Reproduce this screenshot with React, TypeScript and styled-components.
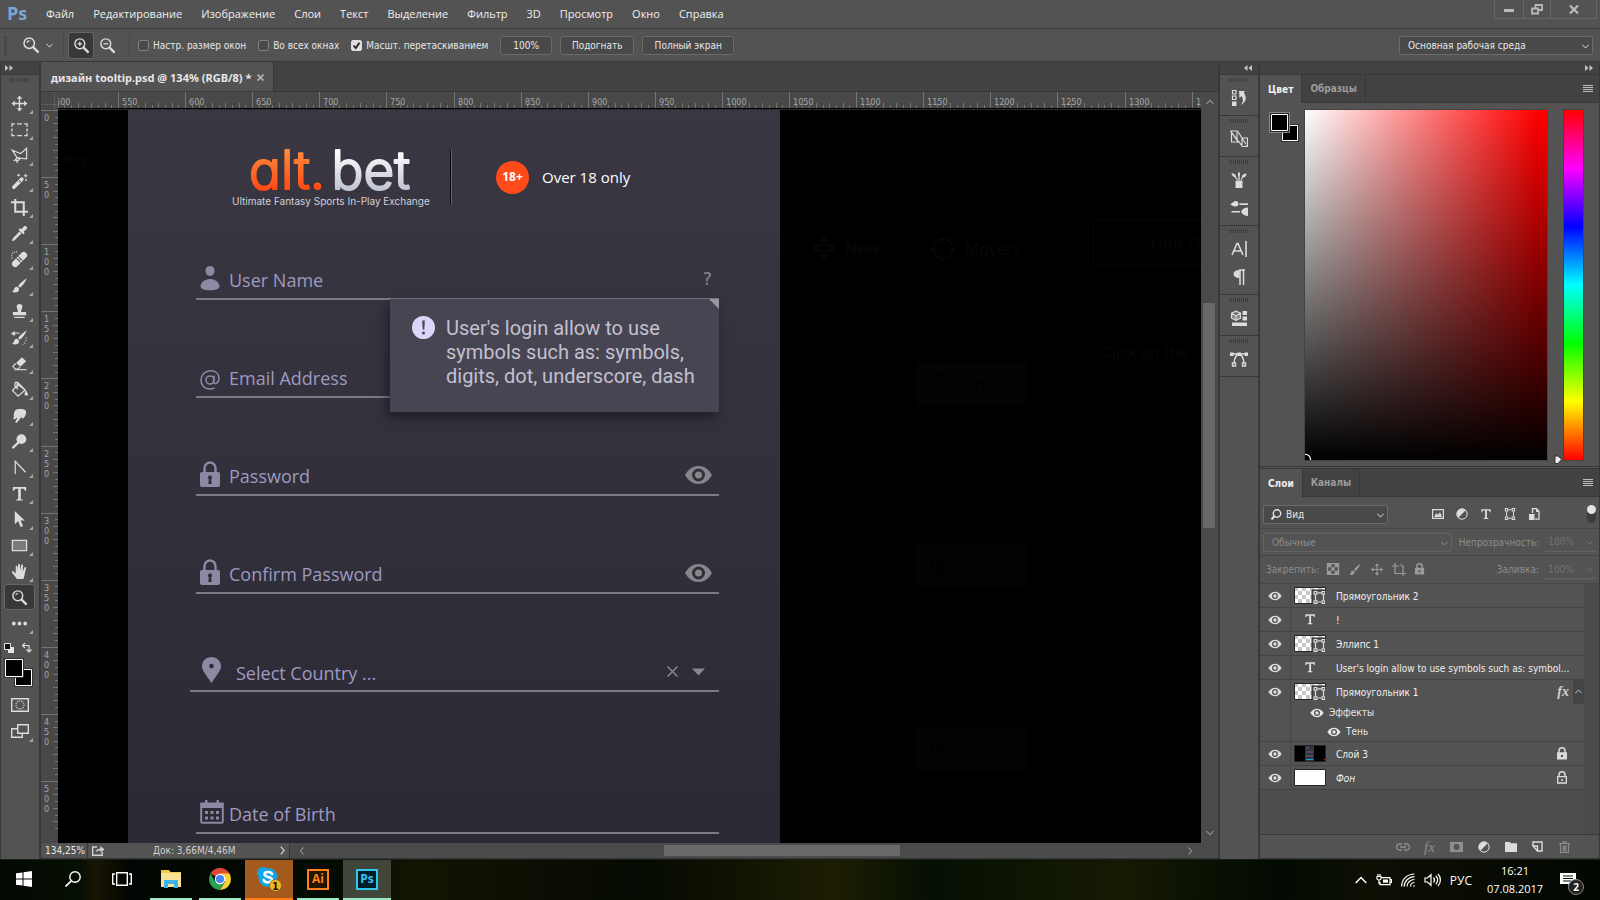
import React from 'react';
import styled, { createGlobalStyle, css } from 'styled-components';

const uiFont = '"DejaVu Sans Condensed", "DejaVu Sans", sans-serif';
const menuFont = '"Open Sans", "Noto Sans", sans-serif';
const line = '#383838';
const base = '#535353';
const dark = '#424242';
const light = '#dcdcdc';

const GlobalStyle = createGlobalStyle`
  *, *::before, *::after { box-sizing: border-box; }
  body { margin: 0; background: ${base}; }
  body, button, input, select { font-family: ${uiFont}; font-size: 10px; color: #e6e6e6; }
  button { background: none; border: 0; padding: 0; margin: 0; cursor: pointer; }
  svg { display: block; flex: none; }
`;

/* ---------- icons ---------- */

type IconProps = { w?: number; h?: number; box?: string; children?: React.ReactNode; stroke?: boolean };
const Svg = ({ w = 18, h = w, box, children, stroke }: IconProps) => (
  <svg
    width={w}
    height={h}
    viewBox={box || `0 0 ${w} ${h}`}
    fill={stroke ? 'none' : 'currentColor'}
    stroke={stroke ? 'currentColor' : 'none'}
    strokeWidth={1.4}
    aria-hidden="true"
  >
    {children}
  </svg>
);

const MoveGlyph = () => (
  <>
    <path d="M9 2V16M2 9H16" fill="none" stroke="currentColor" strokeWidth="1.5" />
    <path d="M9 0.5l3 3.6H6zM9 17.5l3-3.6H6zM0.5 9l3.6-3v6zM17.5 9l-3.6-3v6z" />
  </>
);
const BrushGlyph = () => (
  <path d="M16.8 1.2C13 3.4 9.4 6.8 7.6 9.6l1.9 1.9C12.200 9.400 15.200 5 16.800 1.200zM6.700 10.300c-1.900-.300-3.200 1-3.500 2.700-.200 1.300-1.100 2.200-2.200 2.700 2.600 1.300 6.600 1 7.400-1.600.300-1.100 0-2.100-.300-2.500z" />
);
const LensGlyph = ({ sign = '' }: { sign?: string }) => (
  <g fill="none" stroke="currentColor">
    <circle cx="7.200" cy="7.200" r="5.200" strokeWidth="1.500" />
    <path d="M11 11L16.500 16.500" strokeWidth="2.400" />
    {sign && <path d="M4.800 7.200h4.800" strokeWidth="1.300" />}
    {sign === '+' && <path d="M7.200 4.800v4.800" strokeWidth="1.300" />}
    {!sign && <path d="M5 6.800a2.500 2.500 0 0 1 2.600-2" strokeWidth="1.200" />}
  </g>
);
const PathBoxGlyph = () => (
  <g fill="none" stroke="currentColor" strokeWidth="1.200">
    <path d="M2 4v6M10 4v6M4 2h4M4 12h4" />
    <path d="M.6.6h2.800v2.800H.6zM8.600.6h2.800v2.800H8.600zM.6 10.600h2.800v2.800H.6zM8.600 10.600h2.800v2.800H8.600z" />
  </g>
);
const SerifT = () => <path d="M2 2h14v4.200h-1.300c-.3-1.700-1-2.300-2.500-2.300h-1.800v10c0 1 .5 1.300 2.100 1.400V16.500h-7v-1.200c1.600-.1 2.100-.4 2.100-1.400v-10H5.800C4.300 3.900 3.600 4.500 3.300 6.200H2z" />;
const Chevron = ({ dir = 'down', w = 8 }: { dir?: 'down' | 'up' | 'left' | 'right'; w?: number }) => (
  <Svg w={w} box="0 0 8 8" stroke>
    <path strokeWidth="1.100" d={{ down: 'M.5 2L4 5.800 7.500 2', up: 'M.5 6L4 2.200 7.500 6', left: 'M5.500.5L2.500 4l3 3.500', right: 'M2.500.5L5.500 4l-3 3.500' }[dir]} />
  </Svg>
);
const EyeIcon = () => (
  <Svg w={14} h={10} box="0 0 14 10">
    <path fillRule="evenodd" d="M.3 5C2.200 2.200 4.500.8 7 .8S11.800 2.200 13.700 5C11.800 7.800 9.500 9.200 7 9.200S2.200 7.800.3 5zM7 2a3 3 0 1 0 0 6 3 3 0 0 0 0-6zm0 1.300a1.700 1.700 0 1 1 0 3.400 1.700 1.700 0 0 1 0-3.400z" />
  </Svg>
);
const LockIcon = ({ open, w = 12 }: { open?: boolean; w?: number }) => (
  <Svg w={w} h={w + 1} box="0 0 12 13">
    <path d="M3 6V3.800a3 3 0 0 1 6 0V6" fill="none" stroke="currentColor" strokeWidth="1.500" />
    {open ? (
      <>
        <path d="M1.700 5.700h8.600v6.300H1.700z" fill="none" stroke="currentColor" strokeWidth="1.300" />
        <circle cx="6" cy="9" r="1" />
      </>
    ) : (
      <path fillRule="evenodd" d="M1 5.200h10V12.600H1zM6 7.700a1.200 1.200 0 1 0 0 2.400 1.200 1.200 0 0 0 0-2.400z" />
    )}
  </Svg>
);
const ArrowsIcon = ({ left }: { left?: boolean }) => (
  <Svg w={8} h={6} box="0 0 8 6">
    <path d={left ? 'M3.500 0v6L0 3zM8 0v6L4.500 3z' : 'M0 0v6l3.500-3zM4.500 0v6L8 3z'} />
  </Svg>
);
const Half = ({ w = 12 }: { w?: number }) => (
  <Svg w={w} box="0 0 12 12">
    <circle cx="6" cy="6" r="5.200" fill="none" stroke="currentColor" strokeWidth="1" />
    <path d="M9.700 2.300A5.200 5.200 0 1 0 2.300 9.700z" />
  </Svg>
);
const BurgerIcon = () => (
  <Svg w={10} h={8} stroke>
    <path strokeWidth="1" d="M0 .5h10M0 2.500h10M0 4.500h10M0 6.500h10" />
  </Svg>
);

const tools: { name: string; art: React.ReactNode }[] = [
  { name: 'Перемещение', art: <MoveGlyph /> },
  { name: 'Прямоугольная область', art: <path d="M1 6V3h3M6.500 3h5M14 3h3v3M17 8v3M17 13v2.500h-3M11.500 15.500h-5M4 15.500H1V13M1 11V8" fill="none" stroke="currentColor" strokeWidth="1.400" /> },
  { name: 'Лассо', art: <path d="M1.500 3.500L10 7l6.500-5.500v11L6.500 11.500zM6.500 11.500L3 15M6.500 11.500c2-1 3.500.5 2 2s-3.500 0-3.500 0L7 17" fill="none" stroke="currentColor" strokeWidth="1.300" /> },
  { name: 'Волшебная палочка', art: <><path d="M11.500 6.500L3 15" fill="none" stroke="currentColor" strokeWidth="3.800" strokeLinecap="round" /><path d="M9.700 8.300l-1 1" stroke="#535353" strokeWidth="2" /><path d="M8 .8v3M6.500 2.300h3M15.500.8v4M13.500 2.800h4M16 6.500v2M15 7.500h2" fill="none" stroke="currentColor" strokeWidth="1.100" /></> },
  { name: 'Рамка', art: <path d="M4.500 0v13.500H18M0 3.500h13.500V18" fill="none" stroke="currentColor" strokeWidth="2.200" /> },
  { name: 'Пипетка', art: <><path d="M9.500 7.500L3 14l-1.500 2.500L4 15l6.500-6.500" fill="none" stroke="currentColor" strokeWidth="1.400" /><path d="M8 5l1.500-1.500 1.500 1L13.500 1.500c2-1.500 4.500 1 3 3L13.500 7l1 1.500L13 10z" /></> },
  { name: 'Восстанавливающая кисть', art: <><path d="M4.500 13.500L13.500 4.500" fill="none" stroke="currentColor" strokeWidth="7" strokeLinecap="round" /><path d="M5.500 7.500l5 5M7.500 5.500l5 5" stroke="#535353" strokeWidth="1" /><path d="M7.500 9h.1M9 10.500h.1M9 7.500h.1M10.500 9h.1" stroke="#535353" strokeWidth="1.500" strokeLinecap="round" /><path d="M1 8V4c0-2 2-3 4-3h3" fill="none" stroke="currentColor" strokeDasharray="1 1.500" /></> },
  { name: 'Кисть', art: <BrushGlyph /> },
  { name: 'Штамп', art: <path d="M9 1a3 3 0 0 1 3 3c0 2-1.300 2.800-1.300 5.500H16V13H2V9.500h5.300C7.300 6.800 6 6 6 4a3 3 0 0 1 3-3zM3.500 14.500h11V16h-11z" /> },
  { name: 'Архивная кисть', art: <><BrushGlyph /><path d="M0 5l4-3v2c3-.6 5 0 6 1.500-2-.9-4-.8-6-.3V7.500z" /><path d="M16 9c.5 3-1 6-4 7.500" fill="none" stroke="currentColor" strokeDasharray="1 1.800" /></> },
  { name: 'Ластик', art: <><path d="M11.500 2.500l4.500 4-6 6-4.600-4z" /><path d="M5 9l-3 3 2.500 3H7l2.500-2.200" fill="none" stroke="currentColor" strokeWidth="1.300" /><path d="M4 15.500h12.500" stroke="currentColor" strokeWidth="1.200" /></> },
  { name: 'Заливка', art: <><path d="M7.500 4L1.500 10l6 6 7.500-6.500zM6.500 9V2.500c0-1.800-2.300-1.800-2.300 0V6M6.500 1l8 8" fill="none" stroke="currentColor" strokeWidth="1.300" /><path d="M15.500 9.500c1.500 2 2.500 3.500 2.500 4.700 0 1.700-3.600 1.700-3.600 0 0-1.200.6-2.700 1.100-4.700z" /></> },
  { name: 'Палец', art: <path d="M3 9C3 4 5 2 9 2s7 .5 7 3.500c0 3-1.500 5.500-4 7l-1-2-4.500 6c-1.200 1-2.300 0-1.700-1.200L7 11l-3 2c-1.500.5-2-.8-1-1.800z" /> },
  { name: 'Осветлитель', art: <><circle cx="11" cy="6.500" r="5.200" /><path d="M8 10L1.500 16" stroke="currentColor" strokeWidth="2.400" /></> },
  { name: 'Перо', art: <path d="M4.500 16V2.500L15.500 14" fill="none" stroke="currentColor" strokeWidth="1.300" /> },
  { name: 'Горизонтальный текст', art: <SerifT /> },
  { name: 'Выделение контура', art: <path d="M4 0v14l3.600-3.400L10 17l2.800-1.200-2.700-5.800H14.500z" /> },
  { name: 'Прямоугольник', art: <path d="M1.500 3.500h15v11h-15z" fill="#7a7a7a" stroke="currentColor" strokeWidth="1.400" /> },
  { name: 'Рука', art: <path d="M6 17c-1-2-3-4.500-5-7-.6-1.200.9-1.800 1.800-.9L5 11V4c0-1.300 1.800-1.300 1.900 0l.4 4L7.500 2c0-1.400 2-1.400 2 0l.2 6L10.800 2.500c.2-1.200 2-1 1.900.3L12.300 9l1.900-4c.5-1.200 2-.6 1.700.6L14.500 12c-.4 2.500-1 4-1.500 5z" /> },
  { name: 'Масштаб', art: <LensGlyph /> },
  { name: 'Редактировать панель', art: <path d="M1 9a2 2 0 1 1 4 0 2 2 0 0 1-4 0zM7 9a2 2 0 1 1 4 0 2 2 0 0 1-4 0zM13 9a2 2 0 1 1 4 0 2 2 0 0 1-4 0z" /> },
];

/* ---------- window shell ---------- */

const Screen = styled.div`
  height: 100vh;
  display: flex;
  flex-direction: column;
  overflow: hidden;
  background: ${base};
`;
const MenuBar = styled.header`
  height: 29px;
  flex: none;
  display: flex;
  align-items: flex-start;
  border-bottom: 1px solid ${line};
`;
const PsMark = styled.span`
  width: 37px;
  padding-left: 7px;
  font: bold 18px/26px ${menuFont};
  color: #7ca6d3;
`;
const Menu = styled.nav`
  display: flex;
  flex: 1;
  gap: 1px;
  height: 28px;
`;
const MenuItem = styled.button`
  padding: 0 9px;
  font: 11px/28px ${menuFont};
  color: #f0f0f0;
`;
const WindowControls = styled.div`
  display: flex;
  margin-right: 3px;
  border: 1px solid #666;
  border-top: 0;
  border-radius: 0 0 3px 3px;
  color: #b9b9b9;
`;
const WindowButton = styled.button<{ $w: number }>`
  width: ${(p) => p.$w}px;
  height: 18px;
  display: grid;
  place-items: center;
  color: inherit;
  & + & { border-left: 1px solid #666; }
`;
const OptionsBar = styled.div`
  height: 33px;
  flex: none;
  display: flex;
  align-items: center;
  gap: 8px;
  padding: 0 7px 0 4px;
  border-bottom: 1px solid ${line};
`;
const Grip = styled.span<{ $vertical?: boolean }>`
  flex: none;
  ${(p) =>
    p.$vertical
      ? css`width: 3px; height: 19px; background: repeating-linear-gradient(#3e3e3e 0 1px, transparent 1px 2px);`
      : css`width: 20px; height: 4px; margin: 3px auto 2px; background: repeating-linear-gradient(90deg, #3e3e3e 0 1px, transparent 1px 2px);`}
`;
const IconButton = styled.button<{ $active?: boolean }>`
  width: 26px;
  height: 27px;
  display: grid;
  place-items: center;
  border-radius: 3px;
  color: ${light};
  ${(p) => p.$active && css`background: #383838; border: 1px solid #666;`}
`;
const ToolPicker = styled(IconButton)`
  width: 38px;
  margin-right: 2px;
  grid-auto-flow: column;
  justify-content: end;
  gap: 6px;
`;
const Rule = styled.span`
  width: 1px;
  height: 22px;
  background: #474747;
`;
const ZoomPair = styled.div`
  display: flex;
  margin: 0 1px 0 -4px;
`;
const CheckLabel = styled.label`
  display: flex;
  align-items: center;
  gap: 4px;
  margin-right: 4px;
  white-space: nowrap;
`;
const Check = styled.input`
  appearance: none;
  width: 11px;
  height: 11px;
  margin: 0;
  border: 1px solid #808080;
  border-radius: 2px;
  background: #4a4a4a;
  &:checked {
    border-color: #ddd;
    background: #ddd url("data:image/svg+xml,%3Csvg xmlns='http://www.w3.org/2000/svg' viewBox='0 0 9 9'%3E%3Cpath d='M1.500 4.500l2.300 2.500L7.500 1.800' fill='none' stroke='%23222' stroke-width='1.800'/%3E%3C/svg%3E");
  }
`;
const OptionButton = styled.button<{ $w: number }>`
  width: ${(p) => p.$w}px;
  height: 19px;
  border: 1px solid #6a6a6a;
  border-radius: 3px;
  background: #494949;
  white-space: nowrap;
`;
const SelectBox = styled.span<{ $w?: number; $dim?: boolean; $line?: boolean }>`
  position: relative;
  display: flex;
  align-items: center;
  height: 19px;
  width: ${(p) => (p.$w ? p.$w + 'px' : 'auto')};
  border: 1px solid ${(p) => (p.$dim ? '#636363' : '#6a6a6a')};
  border-radius: 2px;
  background: ${(p) => (p.$dim ? 'transparent' : '#494949')};
  color: ${(p) => (p.$dim ? '#8c8c8c' : '#e6e6e6')};
  ${(p) => p.$line && css`border-width: 0 0 1px; border-radius: 0; color: #717171;`}
  > svg:last-child { position: absolute; right: 3px; top: 6px; pointer-events: none; }
`;
const PlainSelect = styled.select<{ $pad?: number }>`
  appearance: none;
  flex: 1;
  min-width: 0;
  height: 17px;
  border: 0;
  padding: 0 0 0 ${(p) => p.$pad ?? 8}px;
  background: transparent;
  color: inherit;
`;
const WorkspaceBox = styled(SelectBox)`
  margin-left: auto;
`;

const Work = styled.main`
  flex: 1;
  min-height: 0;
  display: flex;
`;

/* ---------- tool strip ---------- */

const ToolStrip = styled.aside`
  width: 40px;
  flex: none;
  display: flex;
  flex-direction: column;
  border: 1px solid ${line};
  border-width: 0 1px 0 1px;
`;
const StripHeader = styled.div<{ $end?: boolean }>`
  height: 13px;
  flex: none;
  display: flex;
  align-items: center;
  justify-content: ${(p) => (p.$end ? 'flex-end' : 'flex-start')};
  padding: 0 6px 0 4px;
  background: ${dark};
  border-bottom: 1px solid ${line};
  color: #c4c4c4;
`;
const ToolButton = styled.button<{ $active?: boolean; $single?: boolean }>`
  position: relative;
  width: 31px;
  height: 26px;
  flex: none;
  margin-left: 3px;
  display: grid;
  place-items: center;
  border-radius: 3px;
  color: ${light};
  ${(p) => p.$active && css`background: #383838; box-shadow: inset 0 0 0 1px #666;`}
  ${(p) =>
    !p.$active && !p.$single &&
    css`
      &::after {
        content: '';
        position: absolute;
        right: 2px;
        bottom: 2px;
        border: 2px solid transparent;
        border-right-color: #aaa;
        border-bottom-color: #aaa;
      }
    `}
`;
const ToolList = styled.div`
  display: flex;
  flex-direction: column;
  padding-top: 6px;
`;
const SwatchTools = styled.div`
  margin: 6px 0 3px 3px;
`;

/* ---------- document ---------- */

const DocumentArea = styled.section`
  flex: 1;
  min-width: 0;
  display: flex;
  flex-direction: column;
  border: 1px solid ${line};
  border-width: 0 1px;
  background: ${dark};
`;
const DocTabs = styled.div`
  height: 30px;
  flex: none;
  display: flex;
  border-bottom: 1px solid ${line};
`;
const DocTab = styled.div`
  display: flex;
  align-items: center;
  gap: 6px;
  padding: 2px 9px 0 10px;
  background: ${base};
  border-right: 1px solid ${line};
  font: bold 11px/27px "Noto Sans", sans-serif;
  white-space: nowrap;
`;
const CloseButton = styled.button`
  color: #b0b0b0;
`;
const Viewport = styled.div`
  flex: 1;
  min-height: 0;
  display: grid;
  grid-template: 17px minmax(0, 1fr) / 17px minmax(0, 1fr) 17px;
  background: #484848;
`;
const RulerSlot = styled.div`
  overflow: hidden;
  font-size: 9px;
`;
const Bar = styled.div<{ $x?: boolean }>`
  display: flex;
  flex-direction: ${(p) => (p.$x ? 'row' : 'column')};
  align-items: center;
  justify-content: space-between;
  background: #4a4a4a;
  color: #9a9a9a;
`;
const ScrollColumn = styled(Bar)`
  grid-column: 3;
  grid-row: 1 / 3;
  padding: 6px 0 6px;
`;
const ThumbTrack = styled.div<{ $x?: boolean }>`
  flex: 1;
  align-self: stretch;
  display: flex;
  flex-direction: ${(p) => (p.$x ? 'row' : 'column')};
  padding: ${(p) => (p.$x ? '2px 0' : '0 3px 0 2px')};
`;
const TrackGap = styled.span<{ $grow: number }>`
  flex: ${(p) => p.$grow} 0 0;
`;
const Thumb = styled.span<{ $grow: number }>`
  flex: ${(p) => p.$grow} 0 0;
  background: #696969;
`;
const Canvas = styled.div`
  position: relative;
  overflow: hidden;
  background: #000;
  border-top: 1px solid #2c2c2c;
`;
const Artboard = styled.div`
  width: 652px;
  min-height: 100%;
  margin-left: 70px;
  padding: 37px 61px 12px 68px;
  background: linear-gradient(#3a3743, #32303b 50%, #2b2933);
`;
const BrandRow = styled.div`
  height: 62px;
  margin: 0 0 55px 36px;
  display: flex;
  align-items: flex-start;
`;
const BrandRule = styled.span`
  width: 2px;
  height: 54px;
  margin: 3px 44px 0 18px;
  background: linear-gradient(90deg, #0b0a0f 50%, #67646f 50%);
`;
const AgeBadge = styled.span`
  width: 33px;
  height: 33px;
  margin-top: 14px;
  border-radius: 50%;
  background: #ff4a1a;
  color: #fff;
  font: bold 12px/32px ${menuFont};
  text-align: center;
`;
const AgeText = styled.span`
  margin: 19px 0 0 13px;
  font: 15px/22px ${menuFont};
  color: #fff;
`;
const Field = styled.div<{ $gap?: number; $wide?: boolean }>`
  position: relative;
  display: flex;
  align-items: center;
  height: 36px;
  margin: 0 0 ${(p) => p.$gap ?? 62}px ${(p) => (p.$wide ? -6 : 0)}px;
  padding: 0 7px 2px ${(p) => (p.$wide ? 11 : 4)}px;
  border-bottom: 2px solid #7c7a83;
  color: #8d88a3;
`;
const FieldLabel = styled.label`
  display: flex;
  align-items: center;
  gap: 4px;
  font: 18px/34px ${menuFont};
  color: #9e9ac0;
  white-space: nowrap;
`;
const FieldIcon = styled.span`
  width: 25px;
  height: 30px;
  color: #8d88a3;
`;
const FieldInput = styled.input`
  flex: 1;
  min-width: 0;
  height: 32px;
  margin-left: 8px;
  border: 0;
  outline: 0;
  background: transparent;
  font: 18px ${menuFont};
  color: #fff;
`;
const CountrySelect = styled.select`
  appearance: none;
  flex: 1;
  height: 32px;
  padding: 2px 10px 0;
  border: 0;
  background: transparent;
  font: 18px ${menuFont};
  color: #9e9ac0;
`;
const FieldAction = styled.button`
  display: flex;
  margin-bottom: 2px;
  color: #88868b;
  & + & { margin: 0 7px 2px 14px; }
`;
const HelpButton = styled(FieldAction)`
  font: 18px/30px "DejaVu Sans", sans-serif;
`;
const Hint = styled.div`
  position: absolute;
  z-index: 2;
  top: 35px;
  right: 0;
  width: 329px;
  height: 113px;
  display: flex;
  gap: 11px;
  padding: 17px 0 0 22px;
  background: #484552;
  box-shadow: -3px 5px 10px rgba(10, 8, 20, 0.5);
  font: 20px/24px Roboto, sans-serif;
  color: #c3c0d0;
  &::after {
    content: '';
    position: absolute;
    top: 0;
    right: 0;
    border: 5px solid #99969f;
    border-bottom-color: transparent;
    border-left-color: transparent;
  }
`;
const HintText = styled.p`
  margin: 0;
  white-space: pre-line;
`;
const Ghost = styled.span<{ $x: number; $y: number; $w?: number }>`
  position: absolute;
  left: ${(p) => p.$x}px;
  top: ${(p) => p.$y}px;
  width: ${(p) => (p.$w ? p.$w + 'px' : 'auto')};
  display: flex;
  align-items: center;
  gap: 10px;
  font: 16px/20px ${menuFont};
  white-space: nowrap;
  color: #080808;
`;
const GhostButton = styled(Ghost)`
  height: 43px;
  padding-left: 15px;
  gap: 14px;
  border-radius: 4px;
  background: #030303;
  color: #000;
`;
const GhostBox = styled(Ghost)`
  height: 47px;
  padding-left: 55px;
  border: 1px solid #070707;
  border-radius: 4px;
`;
const StatusBar = styled.footer`
  height: 16px;
  flex: none;
  display: flex;
  align-items: center;
  background: #4a4a4a;
  border-bottom: 1px solid ${line};
`;
const ZoomInput = styled.input`
  width: 47px;
  height: 15px;
  border: 0;
  border-right: 1px solid ${line};
  padding: 0 0 0 4px;
  background: ${base};
`;
const StatusInfo = styled.div`
  width: 202px;
  height: 15px;
  display: flex;
  align-items: center;
  padding: 0 2px 0 4px;
  background: ${base};
  border-right: 1px solid ${line};
  color: #d0d0d0;
`;
const StatusText = styled.span`
  flex: 1;
  padding-left: 48px;
`;
const HScroll = styled(Bar)`
  flex: 1;
  height: 15px;
  padding: 0 24px 0 8px;
`;

/* ---------- icon dock ---------- */

const Dock = styled.aside`
  width: 41px;
  flex: none;
  border: 1px solid ${line};
  border-width: 0 2px 0 1px;
`;
const DockGroup = styled.div`
  display: flex;
  flex-direction: column;
  align-items: center;
  padding-bottom: 3px;
  border-bottom: 1px solid ${line};
`;
const DockButton = styled.button`
  width: 30px;
  height: 28px;
  display: grid;
  place-items: center;
  color: ${light};
`;

/* ---------- panels ---------- */

const Panels = styled.aside`
  width: 340px;
  flex: none;
  display: flex;
  flex-direction: column;
  border-right: 1px solid ${line};
`;
const Panel = styled.section<{ $grow?: boolean }>`
  display: flex;
  flex-direction: column;
  ${(p) => (p.$grow ? css`flex: 1; min-height: 0; border-top: 1px solid ${line}; margin-top: 1px;` : css`border-bottom: 1px solid ${line};`)}
`;
const PanelTabs = styled.div`
  height: 28px;
  flex: none;
  display: flex;
  align-items: stretch;
  background: ${dark};
  border-bottom: 1px solid ${line};
`;
const PanelTab = styled.button<{ $active?: boolean }>`
  padding: 0 8px;
  font-weight: bold;
  border-right: 1px solid ${line};
  color: ${(p) => (p.$active ? '#f0f0f0' : '#9c9c9c')};
  ${(p) => p.$active && css`background: ${base}; margin-bottom: -1px;`}
`;
const PanelMenu = styled.button`
  margin: 0 6px 0 auto;
  color: #bdbdbd;
`;
const ColorBody = styled.div`
  display: flex;
  align-items: flex-start;
  padding: 6px 15px 5px 9px;
`;
const ColorField = styled.div`
  flex: 1;
  height: 352px;
  margin: 0 15px 0 4px;
  border: 1px solid #444;
  background: linear-gradient(to top, #000, transparent), linear-gradient(to right, #fff, #f00 96%);
  display: flex;
  align-items: flex-end;
  overflow: hidden;
`;
const HueBar = styled.div`
  position: relative;
  width: 21px;
  height: 352px;
  border: 1px solid #444;
  background: linear-gradient(#f00, #f0f, #00f, #0ff, #0f0, #ff0, #f00);
  svg { position: absolute; left: -10px; bottom: -4px; }
`;
const SwatchSlot = styled.div`
  margin-top: 3px;
`;
const ToolRow = styled.div<{ $h: number; $low?: boolean }>`
  height: ${(p) => p.$h}px;
  flex: none;
  display: flex;
  align-items: center;
  padding: ${(p) => (p.$low ? 3 : 0)}px 3px 0;
  border-bottom: 1px solid #474747;
`;
const FilterIcons = styled.div`
  display: flex;
  gap: 12px;
  margin: 0 auto;
  padding-right: 3px;
  color: ${light};
`;
const Toggle = styled.label`
  width: 9px;
  height: 18px;
  border-radius: 5px;
  background: #3c3c3c;
  input { appearance: none; display: block; width: 9px; height: 9px; margin: 0; border-radius: 50%; background: #e4e4e4; }
`;
const Dim = styled.label`
  margin: 0 5px 0 7px;
  color: #8c8c8c;
  white-space: nowrap;
`;
const FillLabel = styled(Dim)`
  margin-left: auto;
`;
const LockIcons = styled.div`
  display: flex;
  gap: 8px;
  margin-left: 7px;
  color: #9a9a9a;
`;
const LockLabel = styled.span`
  margin-left: 3px;
  color: #8c8c8c;
`;
const LayerList = styled.ul`
  flex: 1;
  min-height: 0;
  margin: 0;
  padding: 0 15px 0 0;
  list-style: none;
  background: linear-gradient(#4b4b4b, #4b4b4b) right / 15px 100% no-repeat, #4e4e4e;
`;
const LayerItem = styled.li`
  display: flex;
  background: ${base};
  border-bottom: 1px solid #434343;
`;
const EyeColumn = styled.div`
  width: 31px;
  display: flex;
  justify-content: center;
  padding-top: 7px;
  border-right: 1px solid #474747;
  color: ${light};
`;
const LayerBody = styled.div`
  flex: 1;
  min-width: 0;
`;
const LayerMain = styled.div`
  height: 23px;
  display: flex;
  align-items: center;
  padding-left: 3px;
`;
const ThumbSlot = styled.div`
  width: 42px;
  flex: none;
`;
const LayerName = styled.span<{ $italic?: boolean }>`
  flex: 1;
  min-width: 0;
  padding-top: 2px;
  overflow: hidden;
  white-space: nowrap;
  text-overflow: ellipsis;
  font-style: ${(p) => (p.$italic ? 'italic' : 'normal')};
  color: #f0f0f0;
`;
const LayerLock = styled.span`
  margin-right: 16px;
  color: ${light};
`;
const FxMark = styled.span`
  margin-right: 4px;
  font: italic 14px/20px "Liberation Serif", serif;
  font-weight: bold;
  color: #d0d0d0;
`;
const FoldButton = styled.button`
  width: 11px;
  height: 24px;
  display: grid;
  place-items: center;
  background: #454545;
  color: #c0c0c0;
`;
const EffectRow = styled.div<{ $indent: number }>`
  height: 19px;
  display: flex;
  align-items: center;
  gap: 5px;
  padding-left: ${(p) => p.$indent}px;
  color: #e6e6e6;
`;
const PanelFooter = styled.div`
  height: 25px;
  flex: none;
  display: flex;
  align-items: center;
  justify-content: flex-end;
  gap: 4px;
  padding-right: 23px;
  border: 1px solid ${line};
  border-width: 1px 0;
`;
const FootButton = styled.button<{ $dim?: boolean }>`
  width: 23px;
  height: 22px;
  display: grid;
  place-items: center;
  color: ${(p) => (p.$dim ? '#8e8e8e' : light)};
`;
const FootFx = styled(FxMark)`
  margin: 0;
  font-weight: normal;
  font-size: 15px;
  color: inherit;
`;

/* ---------- taskbar ---------- */

const Taskbar = styled.footer`
  height: 41px;
  flex: none;
  display: flex;
  border-top: 1px solid #1b1f1a;
  background: linear-gradient(90deg, #020802, #071004 5%, #181503 6%, #020602 8%, #040c02 22%, #141403 26%, #050a02 40%, #1d1d03 52%, #061003 58%, #151a03 70%, #020a02 80%, #0d1003 85%, #020702);
`;
const TaskButton = styled.button<{ $line?: string; $bg?: string }>`
  width: 48px;
  margin-right: 1px;
  display: grid;
  place-items: center;
  background: ${(p) => p.$bg || 'transparent'};
  color: #fff;
  border-bottom: 2px solid transparent;
  border-image: ${(p) => (p.$line ? (p.$bg ? `linear-gradient(${p.$line}, ${p.$line}) 1` : `linear-gradient(90deg, transparent 4px, ${p.$line} 4px calc(100% - 4px), transparent calc(100% - 4px)) 1`) : 'none')};
`;
const AppTile = styled.span<{ $c: string; $b: string }>`
  width: 22px;
  height: 21px;
  border: 2px solid ${(p) => p.$c};
  background: ${(p) => p.$b};
  color: ${(p) => p.$c};
  font: bold 12px/16px "Open Sans", sans-serif;
`;
const Tray = styled.div`
  margin-left: auto;
  display: flex;
  align-items: center;
  gap: 9px;
  color: #fff;
  font: 11px/18px ${menuFont};
`;
const Lang = styled.button`
  font: 12px ${menuFont};
  color: #fff;
`;
const Clock = styled.time`
  width: 64px;
  margin: 0 0 0 2px;
  text-align: center;
`;
const Notice = styled.button`
  position: relative;
  width: 28px;
  height: 26px;
  margin: 0 12px 0 4px;
  color: #fff;
`;
const NoticeCount = styled.span`
  position: absolute;
  right: 4px;
  bottom: -2px;
  width: 16px;
  height: 16px;
  border: 1px solid #888;
  border-radius: 50%;
  background: #222;
  font: bold 10px/14px ${menuFont};
`;

/* ---------- drawn parts ---------- */

const STEP = 671 / 50;
const LAST_COLUMN = 1400;
const LAST_ROW = 540;

const TopRuler = () => {
  const ticks: React.ReactNode[] = [];
  for (let u = 495; u < LAST_COLUMN; u += 5) {
    const x = Math.round(60 + ((u - 550) * STEP) / 10);
    const major = u % 50 === 0;
    ticks.push(<path key={u} d={`M${x}.5 ${major ? 0 : u % 10 === 0 ? 11 : 13}V16`} stroke="#757575" />);
    if (major) ticks.push(<text key={'t' + u} x={x + 4} y="13">{u}</text>);
  }
  return (
    <svg width="100%" height="17" fill="#a6a6a6" aria-hidden="true">
      {ticks}
      <path d="M0 16.500H2400" stroke="#000" />
    </svg>
  );
};

const SideRuler = () => {
  const ticks: React.ReactNode[] = [];
  for (let u = 0; u < LAST_ROW; u += 5) {
    const y = Math.round((u * STEP) / 10) + 1;
    const major = u % 50 === 0;
    ticks.push(<path key={u} d={`M${major ? 0 : u % 10 === 0 ? 12 : 14} ${y}.5H17`} stroke="#757575" />);
    if (major) String(u).split('').forEach((d, i) => ticks.push(<text key={`${u}-${i}`} x="3" y={y + 11 + i * 10}>{d}</text>));
  }
  return (
    <svg width="17" height="100%" fill="#a6a6a6" aria-hidden="true">
      {ticks}
    </svg>
  );
};

const BrandLogo = () => (
  <svg width="200" height="64" role="img" aria-label="alt.bet">
    <defs>
      <linearGradient id="flame" x1="0" y1="0" x2="0" y2="1">
        <stop offset="0.2" stopColor="#ff8a3c" />
        <stop offset="0.8" stopColor="#ff4a14" />
      </linearGradient>
      <linearGradient id="steel" x1="0" y1="0" x2="0" y2="1">
        <stop offset="0.2" stopColor="#ffffff" />
        <stop offset="0.8" stopColor="#c2c5d2" />
      </linearGradient>
    </defs>
    <g fontFamily="Inter, sans-serif" fontSize="53" fontWeight="300" strokeWidth="2" strokeLinejoin="round" style={{ fontFeatureSettings: '"cv11" 1' }}>
      <text x="17" y="42" fill="url(#flame)" stroke="url(#flame)">alt.</text>
      <text x="178" y="42" textAnchor="end" fill="url(#steel)" stroke="url(#steel)">bet</text>
    </g>
    <text x="0" y="58" fill="#d2d1d8" fontFamily="Inter, sans-serif" fontSize="10">Ultimate Fantasy Sports In-Play Exchange</text>
  </svg>
);

const Swatches = () => (
  <svg width="31" height="31" aria-hidden="true">
    <path d="M12.500 12.500h17v17h-17z" fill="#000" stroke="#333" />
    <path d="M13.500 13.500h15v15h-15z" fill="#000" stroke="#fff" />
    <path d="M.5.5h20v20H.5z" fill="#000" stroke="#888" />
    <path d="M1.500 1.500h18v18h-18z" fill="#000" stroke="#222" />
    <path d="M2.500 2.500h16v16h-16z" fill="#000" stroke="#fff" />
  </svg>
);

const ShapeThumb = () => (
  <svg width="32" height="17" color={light} aria-hidden="true">
    <defs>
      <pattern id="checker" width="8" height="8" patternUnits="userSpaceOnUse">
        <path d="M0 0h8v8H0z" fill="#fff" />
        <path d="M0 0h4v4H0zM4 4h4v4H4z" fill="#c8c8c8" />
      </pattern>
    </defs>
    <path d="M.5.5h31v16H.5z" fill="url(#checker)" stroke="#262626" />
    <path d="M18 3h14v14H18z" fill="#535353" stroke="#262626" />
    <g transform="translate(19.500 4) scale(1 .92)"><PathBoxGlyph /></g>
    <path d="M31.500 4v13" stroke="#535353" strokeWidth="1" />
  </svg>
);
const TextThumb = () => (
  <svg width="32" height="17" fill={light} aria-hidden="true">
    <g transform="translate(10 2) scale(.68)"><SerifT /></g>
  </svg>
);
const ImageThumb = ({ blank }: { blank?: boolean }) => (
  <svg width="32" height="17" aria-hidden="true">
    <path d="M.5.5h31v16H.5z" fill={blank ? '#fff' : '#000'} stroke="#262626" />
    {!blank && (
      <>
        <path d="M11 1h9v15h-9z" fill="#35333f" />
        <path d="M12 3h3M12 7h7M12 11h7" stroke="#676478" />
        <path d="M12 14.500h7" stroke="#16a6e6" />
        <path d="M30 14h1v1h-1z" fill="#e33" />
      </>
    )}
  </svg>
);

const PersonIcon = () => (
  <Svg w={20} h={26}>
    <path d="M10 1c3 0 4.500 2 4.500 4.500S12.800 11 10 11 5.500 8 5.500 5.500 7 1 10 1zM10 14c5 0 9 3 9.500 7 .2 3-4 4.200-9.500 4.200S.3 24 .5 21c.5-4 4.500-7 9.500-7z" />
  </Svg>
);
const PadlockIcon = () => (
  <Svg w={20} h={26}>
    <path d="M4.500 12V7a5.500 5.500 0 0 1 11 0v5" fill="none" stroke="currentColor" strokeWidth="2.400" />
    <path fillRule="evenodd" d="M2 11h16c1.300 0 2 .7 2 2v11c0 1.300-.7 2-2 2H2c-1.300 0-2-.7-2-2V13c0-1.300.7-2 2-2zM10 14.500a2 2 0 0 0-1.200 3.700L8.300 23h3.400l-.5-4.800A2 2 0 0 0 10 14.500z" />
  </Svg>
);
const BigEye = () => (
  <Svg w={27} h={18} box="0 0 27 18">
    <path fillRule="evenodd" d="M0 9C3.500 3 8 0 13.500 0S23.500 3 27 9c-3.500 6-8 9-13.500 9S3.500 15 0 9zM13.500 2.500a6.500 6.500 0 1 0 0 13 6.500 6.500 0 0 0 0-13zm0 3a3.500 3.500 0 1 1 0 7 3.500 3.500 0 0 1 0-7z" />
  </Svg>
);
const CalendarIcon = () => (
  <Svg w={24} h={25}>
    <path d="M1.200 4.500h21.600V22.500c0 .8-.5 1.300-1.300 1.300H2.500c-.8 0-1.300-.5-1.300-1.300z" fill="none" stroke="currentColor" strokeWidth="2" />
    <path d="M1 4.500h22V9H1zM5 1h2.500v5H5zM16.500 1H19v5h-2.500zM5 12h3v3H5zM10.500 12h3v3h-3zM16 12h3v3h-3zM5 17.500h3v3H5zM10.500 17.500h3v3h-3zM16 17.500h3v3h-3z" />
  </Svg>
);
const DollarRing = () => (
  <Svg w={22} stroke>
    <circle cx="11" cy="11" r="9.500" />
    <path d="M11 4.500v13M14 7.500c-2-1.600-6-1.200-6 1.200 0 2.600 6 2 6 4.800 0 2.400-4 2.600-6.200 1" />
  </Svg>
);

/* ---------- sections ---------- */

const menus = ['Файл', 'Редактирование', 'Изображение', 'Слои', 'Текст', 'Выделение', 'Фильтр', '3D', 'Просмотр', 'Окно', 'Справка'];

const TopBars = () => (
  <>
    <MenuBar>
      <PsMark>Ps</PsMark>
      <Menu>{menus.map((m) => <MenuItem key={m}>{m}</MenuItem>)}</Menu>
      <WindowControls>
        <WindowButton $w={28} aria-label="Свернуть"><Svg w={10} h={10}><path d="M0 5h10v3H0z" /></Svg></WindowButton>
        <WindowButton $w={27} aria-label="Восстановить">
          <Svg w={12} h={11} stroke><path strokeWidth="1.800" d="M1 4.500h6v5H1zM4.500 4V1H11v5H8" /></Svg>
        </WindowButton>
        <WindowButton $w={46} aria-label="Закрыть"><Svg w={10} h={9} stroke><path strokeWidth="2.200" d="M1 .5l8 8M9 .5l-8 8" /></Svg></WindowButton>
      </WindowControls>
    </MenuBar>
    <OptionsBar>
      <Grip $vertical />
      <ToolPicker aria-label="Масштаб"><Svg><LensGlyph /></Svg><Chevron w={7} /></ToolPicker>
      <Rule />
      <ZoomPair>
        <IconButton $active aria-label="Увеличить"><Svg w={17} box="0 0 18 18"><LensGlyph sign="+" /></Svg></IconButton>
        <IconButton aria-label="Уменьшить"><Svg w={17} box="0 0 18 18"><LensGlyph sign="-" /></Svg></IconButton>
      </ZoomPair>
      <Rule />
      <CheckLabel><Check type="checkbox" />Настр. размер окон</CheckLabel>
      <CheckLabel><Check type="checkbox" />Во всех окнах</CheckLabel>
      <CheckLabel><Check type="checkbox" defaultChecked />Масшт. перетаскиванием</CheckLabel>
      <OptionButton $w={52}>100%</OptionButton>
      <OptionButton $w={74}>Подогнать</OptionButton>
      <OptionButton $w={92}>Полный экран</OptionButton>
      <WorkspaceBox $w={194}>
        <PlainSelect aria-label="Рабочая среда"><option>Основная рабочая среда</option></PlainSelect>
        <Chevron w={7} />
      </WorkspaceBox>
    </OptionsBar>
  </>
);

const ToolBox = () => (
  <ToolStrip>
    <StripHeader><ArrowsIcon /></StripHeader>
    <Grip />
    <ToolList>
      {tools.map((t) => (
        <ToolButton key={t.name} aria-label={t.name} $active={t.name === 'Масштаб'}>
          <Svg w={17} box="0 0 18 18">{t.art}</Svg>
        </ToolButton>
      ))}
    </ToolList>
    <SwatchTools>
      <svg width="32" height="47" aria-hidden="true">
        <path d="M4 5h6v6H4z" fill="#e4e4e4" />
        <path d="M.5 1.500h6v6h-6z" fill="#111" stroke="#e4e4e4" />
        <path d="M19 3.500h6v6M21 1l-2.500 2.500L21 6M22.500 7.500L25 10l2.500-2.500" fill="none" stroke="#dcdcdc" strokeWidth="1.200" />
        <path d="M10.500 26.500h18v18h-18z" fill="#000" stroke="#333" />
        <path d="M11.500 27.500h16v16h-16z" fill="#000" stroke="#fff" />
        <path d="M.5 16.500h19v19H.5z" fill="#000" stroke="#333" />
        <path d="M1.500 17.500h17v17h-17z" fill="#000" stroke="#fff" />
      </svg>
    </SwatchTools>
    <ToolButton $single aria-label="Быстрая маска">
      <Svg w={18} h={14} stroke><path d="M.7.7h16.600v12.600H.7z" /><circle cx="9" cy="7" r="4" strokeDasharray="1 1.200" /></Svg>
    </ToolButton>
    <ToolButton aria-label="Режим экрана">
      <Svg w={18} h={14} stroke><path d="M6.700.7h10.600v8.600H6.700zM6 4.700H.7v8.600h10.600V10" /></Svg>
    </ToolButton>
  </ToolStrip>
);

const SignUpForm = () => (
  <Artboard>
    <BrandRow>
      <BrandLogo />
      <BrandRule />
      <AgeBadge>18+</AgeBadge>
      <AgeText>Over 18 only</AgeText>
    </BrandRow>
    <Field>
      <FieldLabel htmlFor="user"><FieldIcon><PersonIcon /></FieldIcon>User Name</FieldLabel>
      <FieldInput id="user" />
      <HelpButton aria-label="Help">?</HelpButton>
      <Hint role="tooltip">
        <svg width="23" height="23" aria-hidden="true">
          <circle cx="11.500" cy="11.500" r="11.500" fill="#ddd6f8" />
          <path d="M10.200 4.500h2.600l-.5 9h-1.600z" fill="#484552" />
          <circle cx="11.500" cy="17" r="1.500" fill="#484552" />
        </svg>
        <HintText>{"User's login allow to use\nsymbols such as: symbols,\ndigits, dot, underscore, dash"}</HintText>
      </Hint>
    </Field>
    <Field>
      <FieldLabel htmlFor="email">
        <FieldIcon>
          <Svg w={20} h={30} stroke>
            <circle cx="10" cy="17" r="4" strokeWidth="1.600" />
            <path strokeWidth="1.600" d="M14.300 12.500l-.8 6.500c.2 2.600 5.400 2 5.500-3.500C19 10.500 15.500 7.800 10.500 7.800 5 7.800 1 12 1 17.200S4.500 26 9.500 26c2 0 3.500-.4 5-1" />
          </Svg>
        </FieldIcon>
        Email Address
      </FieldLabel>
      <FieldInput id="email" type="email" />
    </Field>
    <Field>
      <FieldLabel htmlFor="pass"><FieldIcon><PadlockIcon /></FieldIcon>Password</FieldLabel>
      <FieldInput id="pass" type="password" />
      <FieldAction aria-label="Show password"><BigEye /></FieldAction>
    </Field>
    <Field>
      <FieldLabel htmlFor="confirm"><FieldIcon><PadlockIcon /></FieldIcon>Confirm Password</FieldLabel>
      <FieldInput id="confirm" type="password" />
      <FieldAction aria-label="Show password"><BigEye /></FieldAction>
    </Field>
    <Field $wide $gap={106}>
      <FieldLabel htmlFor="country" aria-label="Country">
        <FieldIcon>
          <Svg w={20} h={26}><path fillRule="evenodd" d="M10.500 0C16 0 20 4 20 9c0 4.500-3.500 8-9.500 17C4.500 17 1 13.500 1 9c0-5 4-9 9.500-9zm0 6.800a2.300 2.300 0 1 0 0 4.600 2.300 2.300 0 0 0 0-4.600z" /></Svg>
        </FieldIcon>
      </FieldLabel>
      <CountrySelect id="country"><option>Select Country ...</option></CountrySelect>
      <FieldAction aria-label="Clear"><Svg w={11} stroke><path strokeWidth="1.500" d="M.5.5l10 10M10.500.5l-10 10" /></Svg></FieldAction>
      <FieldAction aria-label="Open"><Svg w={13} h={11}><path d="M0 2.500h13L6.500 9.500z" /></Svg></FieldAction>
    </Field>
    <Field $gap={0}>
      <FieldLabel htmlFor="birth"><FieldIcon><CalendarIcon /></FieldIcon>Date of Birth</FieldLabel>
      <FieldInput id="birth" />
    </Field>
  </Artboard>
);

const DocumentPane = () => (
  <DocumentArea>
    <DocTabs>
      <DocTab>
        дизайн tooltip.psd @ 134% (RGB/8) *
        <CloseButton aria-label="Закрыть документ"><Svg w={7} stroke><path strokeWidth="1.800" d="M.5.5l6 6M6.500.5l-6 6" /></Svg></CloseButton>
      </DocTab>
    </DocTabs>
    <Viewport>
      <svg width="17" height="17" aria-hidden="true"><path d="M0 12.500h17M13.500 0v17" stroke="#6c6c6c" strokeDasharray="1 1" /></svg>
      <RulerSlot><TopRuler /></RulerSlot>
      <ScrollColumn>
        <Chevron dir="up" />
        <ThumbTrack>
          <TrackGap $grow={196} /><Thumb $grow={225} /><TrackGap $grow={300} />
        </ThumbTrack>
        <Chevron />
      </ScrollColumn>
      <RulerSlot><SideRuler /></RulerSlot>
      <Canvas>
        <SignUpForm />
        <Ghost $x={6} $y={38}>ory</Ghost>
        <Ghost $x={755} $y={127}><Svg w={22} stroke><path d="M9 1h4v8h8v4h-8v8H9v-8H1V9h8z" /></Svg>New</Ghost>
        <Ghost $x={873} $y={127}><Svg w={24} stroke><circle cx="12" cy="12" r="10" /><path d="M12 0v6M12 18v6M0 12h6M18 12h6" /></Svg>Movers</Ghost>
        <GhostBox $x={1035} $y={109} $w={160}>Your O</GhostBox>
        <Ghost $x={1044} $y={232}>Click on the</Ghost>
        {[252, 434, 617].map((y) => <GhostButton key={y} $x={857} $y={y} $w={112}><DollarRing />Enter</GhostButton>)}
      </Canvas>
    </Viewport>
    <StatusBar>
      <ZoomInput aria-label="Масштаб документа" defaultValue="134,25%" />
      <StatusInfo>
        <Svg w={13} h={11} stroke><path d="M5 2H.7v8.300h9.600V7" /><path d="M3.500 7.500C4 4.500 6 3.500 8.500 3.500V1l4 3.500-4 3.300V5.500C6.500 5.500 4.800 6 3.500 7.500z" fill="currentColor" stroke="none" /></Svg>
        <StatusText>Док: 3,66M/4,46M</StatusText>
        <Chevron dir="right" w={9} />
      </StatusInfo>
      <HScroll $x>
        <Chevron dir="left" />
        <ThumbTrack $x>
          <TrackGap $grow={358} /><Thumb $grow={236} /><TrackGap $grow={286} />
        </ThumbTrack>
        <Chevron dir="right" />
      </HScroll>
    </StatusBar>
  </DocumentArea>
);

const dockGroups: { name: string; art: React.ReactNode }[][] = [
  [{ name: 'История', art: <><path d="M2.500 1.500h3.500v3.500H2.500zM2.500 7h3.500v3.500H2.500z" fill="none" stroke="currentColor" strokeWidth="1.200" /><path d="M2 12.500h4.500V17H2zM9 2h6l-1.300 1.800C17 8 16.500 13 11 16c2.500-3.500 2.500-6.500.5-9L9.500 9z" /></> }],
  [{ name: 'Слои-композиции', art: <path d="M.5 1h7l10 15.500h-5zM.5 1l8 11.500M1.500 3v9h6.500M7 2v7M11.500 8h6v8.500M12 8v7" fill="none" stroke="currentColor" strokeWidth="1.200" /> }],
  [
    { name: 'Наборы кистей', art: <path d="M5.500 9.500h7V17h-7zM8.300 9V5C7.500 3.500 8 2 9 .5c1 1.500 1.500 3 .7 4.500v4zM7 9L5 6.500C3 6 1.700 4 1.500 2c2.500.3 4.500 1.700 4.700 3.700L8 9zM10.500 9l1.300-3c.2-2 2-3.500 4.700-3.500 0 2.300-1.500 4-3.700 4.200L11.500 9z" /> },
    { name: 'Кисть', art: <path d="M0 5c2.500 0 3-3 5.500-3S8.500 3.500 8.500 5 7.500 7.500 5.500 7.500 1 6 0 5zM9.500 4.300H18v1.600H9.500zM1.500 12H10v1.600H1.500zM18 8.500v8.500c-3 0-6-1.500-7-4.200 1-2.800 4-4.300 7-4.300z" /> },
  ],
  [
    { name: 'Символ', art: <path d="M2 15L7 3.500h1L13 15M4 11h7M16 1v16" fill="none" stroke="currentColor" strokeWidth="1.600" /> },
    { name: 'Абзац', art: <><path d="M9.500 2v8C1.500 10 1.500 2 9.500 2z" /><path d="M9 2h6M10 2v15M13.500 2v15" fill="none" stroke="currentColor" strokeWidth="1.500" /></> },
  ],
  [{ name: 'Библиотеки', art: <><path d="M6 2l4.500 2.200v5L6 11.500 1.500 9.200v-5zM1.500 4.200L6 6.500l4.500-2.300M6 6.500v5" fill="#8b8b8b" stroke="currentColor" strokeWidth="1.100" /><path d="M12.500 2H17v4h-4.500zM12.500 7.500H17v4h-4.500zM2 13.500h15V17H2z" /></> }],
  [{ name: 'Контуры', art: <><path d="M2 4h14M9 4C5.500 5 4.500 8 4 13M9 4c3.500 1 4.500 4 5 9" fill="none" stroke="currentColor" strokeWidth="1.400" /><path d="M0 2.500h3.500V6H0zM7.500 2.500H11V6H7.500zM14.500 2.500H18V6h-3.500z" /><path d="M2.500 13h3v3h-3zM12.500 13h3v3h-3z" fill="none" stroke="currentColor" /></> }],
];

const IconDock = () => (
  <Dock>
    <StripHeader $end><ArrowsIcon left /></StripHeader>
    {dockGroups.map((group) => (
      <DockGroup key={group[0].name}>
        <Grip />
        {group.map((b) => <DockButton key={b.name} aria-label={b.name}><Svg>{b.art}</Svg></DockButton>)}
      </DockGroup>
    ))}
  </Dock>
);

type Layer = { name: string; kind: 'shape' | 'text' | 'image' | 'blank'; lock?: 'full' | 'open'; fx?: boolean };
const layers: Layer[] = [
  { name: 'Прямоугольник 2', kind: 'shape' },
  { name: '!', kind: 'text' },
  { name: 'Эллипс 1', kind: 'shape' },
  { name: "User's login allow to use symbols such as: symbol...", kind: 'text' },
  { name: 'Прямоугольник 1', kind: 'shape', fx: true },
  { name: 'Слой 3', kind: 'image', lock: 'full' },
  { name: 'Фон', kind: 'blank', lock: 'open' },
];

const LayerRow = ({ layer }: { layer: Layer }) => (
  <LayerItem>
    <EyeColumn><EyeIcon /></EyeColumn>
    <LayerBody>
      <LayerMain>
        <ThumbSlot>
          {layer.kind === 'shape' ? <ShapeThumb /> : layer.kind === 'text' ? <TextThumb /> : <ImageThumb blank={layer.kind === 'blank'} />}
        </ThumbSlot>
        <LayerName $italic={layer.kind === 'blank'}>{layer.name}</LayerName>
        {layer.lock && <LayerLock><LockIcon open={layer.lock === 'open'} /></LayerLock>}
        {layer.fx && <><FxMark>fx</FxMark><FoldButton aria-label="Свернуть эффекты"><Chevron dir="up" w={7} /></FoldButton></>}
      </LayerMain>
      {layer.fx && (
        <>
          <EffectRow $indent={19}><EyeIcon />Эффекты</EffectRow>
          <EffectRow $indent={36}><EyeIcon />Тень</EffectRow>
        </>
      )}
    </LayerBody>
  </LayerItem>
);

const SidePanels = () => (
  <Panels>
    <StripHeader $end><ArrowsIcon /></StripHeader>
    <Panel>
      <PanelTabs>
        <PanelTab $active>Цвет</PanelTab>
        <PanelTab>Образцы</PanelTab>
        <PanelMenu aria-label="Меню панели"><BurgerIcon /></PanelMenu>
      </PanelTabs>
      <ColorBody>
        <SwatchSlot><Swatches /></SwatchSlot>
        <ColorField>
          <Svg w={7} stroke><path stroke="#fff" strokeWidth="1.200" d="M0 1.500A5 5 0 0 1 5.500 7" /></Svg>
        </ColorField>
        <HueBar><Svg w={8} h={9}><path d="M1 1h3l3.500 3.500L4 8.500H1z" fill="#eee" stroke="#222" strokeWidth=".8" /></Svg></HueBar>
      </ColorBody>
    </Panel>
    <Panel $grow>
      <PanelTabs>
        <PanelTab $active>Слои</PanelTab>
        <PanelTab>Каналы</PanelTab>
        <PanelMenu aria-label="Меню панели"><BurgerIcon /></PanelMenu>
      </PanelTabs>
      <ToolRow $h={32} $low>
        <SelectBox $w={125}>
          <Svg w={18} h={11} stroke><circle cx="13" cy="4.500" r="3.700" /><path strokeWidth="2" d="M10.500 7L7.500 10.500" /></Svg>
          <PlainSelect $pad={4} aria-label="Фильтр слоёв"><option>Вид</option></PlainSelect>
          <Chevron w={7} />
        </SelectBox>
        <FilterIcons>
          <Svg w={12} h={12}><path d="M.6 1.600h10.800v8.800H.6z" fill="none" stroke="currentColor" strokeWidth="1.200" /><path d="M2 9l2.500-4L6 7l2-3 2 5z" /></Svg>
          <Half />
          <Svg w={12} box="0 0 18 18"><SerifT /></Svg>
          <Svg w={12} box="0 0 12 14"><PathBoxGlyph /></Svg>
          <Svg w={12}><path d="M4.500 5V.7h4L11 3.200v8H7" fill="none" stroke="currentColor" strokeWidth="1.300" /><path d="M1 6h5.500v6H1zM8 1v3h3z" /></Svg>
        </FilterIcons>
        <Toggle><input type="checkbox" defaultChecked aria-label="Фильтрация слоёв" /></Toggle>
      </ToolRow>
      <ToolRow $h={27}>
        <SelectBox $w={190} $dim><PlainSelect aria-label="Режим наложения"><option>Обычные</option></PlainSelect><Chevron w={7} /></SelectBox>
        <Dim htmlFor="opacity">Непрозрачность:</Dim>
        <SelectBox $w={52} $dim $line><PlainSelect $pad={4} id="opacity"><option>100%</option></PlainSelect><Chevron w={7} /></SelectBox>
      </ToolRow>
      <ToolRow $h={28}>
        <LockLabel>Закрепить:</LockLabel>
        <LockIcons>
          <Svg w={14} h={12}><path d="M1.500.5h11v11h-11z" fill="none" stroke="currentColor" /><path d="M2 1h3.300v3.300H2zM8.700 1H12v3.300H8.700zM5.300 4.300h3.400v3.400H5.300zM2 7.700h3.300V11H2zM8.700 7.700H12V11H8.700z" /></Svg>
          <Svg w={14} h={13} box="0 0 18 18"><BrushGlyph /></Svg>
          <Svg w={14} h={13} box="0 0 18 18"><MoveGlyph /></Svg>
          <Svg w={14} h={13} stroke><path d="M3 0v10.500h11M0 3h7M11 5v8M9 3h2v2" strokeWidth="1.200" /><path d="M8 1l4 3.500" strokeWidth="1" /></Svg>
          <LockIcon w={11} />
        </LockIcons>
        <FillLabel htmlFor="fill">Заливка:</FillLabel>
        <SelectBox $w={52} $dim $line><PlainSelect $pad={4} id="fill"><option>100%</option></PlainSelect><Chevron w={7} /></SelectBox>
      </ToolRow>
      <LayerList>{layers.map((l) => <LayerRow key={l.name} layer={l} />)}</LayerList>
      <PanelFooter>
        <FootButton $dim aria-label="Связать слои"><Svg w={14} h={8} stroke><path strokeWidth="1.300" d="M6 1H3.500a2.800 2.800 0 0 0 0 6H6M8 1h2.500a2.800 2.800 0 0 1 0 6H8M4 4h6" /></Svg></FootButton>
        <FootButton $dim aria-label="Стиль слоя"><FootFx>fx</FootFx></FootButton>
        <FootButton $dim aria-label="Добавить маску"><Svg w={13} h={10}><path fillRule="evenodd" d="M0 0h13v10H0zM6.500 2a3 3 0 1 0 0 6 3 3 0 0 0 0-6z" /></Svg></FootButton>
        <FootButton aria-label="Корректирующий слой"><Half /></FootButton>
        <FootButton aria-label="Новая группа"><Svg w={12} h={11}><path d="M0 1h5l1 1.200h6V11H0z" /></Svg></FootButton>
        <FootButton aria-label="Новый слой"><Svg w={11} stroke><path d="M1 5V1h9v9H6M1 5h4.500v5z" /></Svg></FootButton>
        <FootButton $dim aria-label="Удалить слой"><Svg w={11} h={12} stroke><path strokeWidth="1.100" d="M0 2.500h11M4 2.500V.7h3v1.800M1.500 3v8.400h8V3M4 4.500v5.500M5.500 4.500v5.500M7 4.500v5.500" /></Svg></FootButton>
      </PanelFooter>
    </Panel>
  </Panels>
);

const mint = '#9de8c4';

const WindowsTaskbar = () => (
  <Taskbar>
    <TaskButton aria-label="Пуск"><Svg w={16}><path d="M0 2.300l6.500-.9v6.100H0zM7.500 1.200L16 0v7.500H7.500zM0 8.500h6.500v6.100L0 13.700zM7.500 8.500H16V16l-8.500-1.200z" /></Svg></TaskButton>
    <TaskButton aria-label="Поиск"><Svg w={16} stroke><circle cx="10" cy="6" r="5.200" /><path strokeWidth="1.700" d="M6.300 9.800L.5 15.500" /></Svg></TaskButton>
    <TaskButton aria-label="Представление задач"><Svg w={20} h={14} stroke><path d="M4.700.7h10.600v12.600H4.700zM3 2H.7v10H3M17 2h2.300v10H17" /></Svg></TaskButton>
    <TaskButton $line={mint} aria-label="Проводник">
      <Svg w={22} h={18}><path d="M1 0h8l1.500 2H21v15H1z" fill="#f2c94f" /><path d="M1 3h20v14H1z" fill="#fbe394" /><path d="M4 10h14v8h-4v-4H8v4H4z" fill="#3fb4ea" /></Svg>
    </TaskButton>
    <TaskButton $line={mint} aria-label="Chrome">
      <Svg w={22}>
        <path d="M11 11L1.500 5.500A11 11 0 0 1 20.500 5.500z" fill="#e04a3b" />
        <path d="M20.500 5.500A11 11 0 0 1 11 22l4.800-8.200L11 5.500z" fill="#fbcf3b" />
        <path d="M1.500 5.500A11 11 0 0 0 11 22l4.800-8.200L6.200 13.800z" fill="#2ba24c" />
        <circle cx="11" cy="11" r="5.200" fill="#fff" /><circle cx="11" cy="11" r="4.100" fill="#4285f4" />
      </Svg>
    </TaskButton>
    <TaskButton $line="#ff7a10" $bg="#a35a1c" aria-label="Skype">
      <svg width="26" height="26" aria-hidden="true">
        <circle cx="12" cy="11.500" r="9.500" fill="#11a6ea" /><circle cx="7" cy="7" r="6" fill="#11a6ea" /><circle cx="16.500" cy="16.500" r="6" fill="#11a6ea" />
        <path d="M16 8c-.8-2.500-7.500-3-7.500.2 0 3.500 7.500 2 7.500 5.600 0 3.500-7.600 3.200-8.200.2" fill="none" stroke="#fff" strokeWidth="2.600" strokeLinecap="round" />
        <circle cx="19.500" cy="19.500" r="6" fill="#f5b320" stroke="#7a4a08" strokeWidth=".6" />
        <text x="19.500" y="23.500" textAnchor="middle" fontSize="10" fontWeight="bold" fill="#111">1</text>
      </svg>
    </TaskButton>
    <TaskButton $line={mint} aria-label="Illustrator"><AppTile $c="#ff7f18" $b="#261300">Ai</AppTile></TaskButton>
    <TaskButton $line={mint} $bg="#40473a" aria-label="Photoshop"><AppTile $c="#31c5f0" $b="#001d2a">Ps</AppTile></TaskButton>
    <Tray>
      <Svg w={12} h={8} stroke><path strokeWidth="1.500" d="M.7 7L6 1.500 11.300 7" /></Svg>
      <Svg w={16} h={12} stroke><path strokeWidth="1.200" d="M5 3.600h9v7H4V8M14 5.500h1.500v3H14M1 2.500h4v2c0 2-4 2-4 0zM2 0v2M4 0v2M3 6v4" /><path d="M7 5.500h5v3.200H7z" fill="currentColor" stroke="none" /></Svg>
      <Svg w={14} h={14} stroke><path strokeWidth="1.200" d="M12.500 13.500l1-1M9.500 13.500c0-2.500 2-4 4-4M6 13.500C6 9.500 9.500 6.500 13.500 6.500M3.200 13.500C3.200 8 8 3.600 13.500 3.600M.7 13.500C.7 6 6.500 1 13.500 1" /></Svg>
      <Svg w={17} h={14} stroke><path strokeWidth="1.200" d="M1 5h2.500L7 1.700v10.600L3.500 9H1zM9.500 4.500c1.300 1.500 1.300 3.500 0 5M11.800 2.700c2.200 2.500 2.200 6 0 8.600M14 1c3.200 3.500 3.200 8.500 0 12" /></Svg>
      <Lang>РУС</Lang>
      <Clock>16:21<br />07.08.2017</Clock>
      <Notice aria-label="Уведомления">
        <Svg w={17} h={17}><path fillRule="evenodd" d="M0 1h16v11H11.500V15.500L8 12H0zM3 3.500v1h10v-1zM3 6v1h10V6zM3 8.500v1h8v-1z" /></Svg>
        <NoticeCount>2</NoticeCount>
      </Notice>
    </Tray>
  </Taskbar>
);

export default function App() {
  return (
    <>
      <GlobalStyle />
      <Screen>
        <TopBars />
        <Work>
          <ToolBox />
          <DocumentPane />
          <IconDock />
          <SidePanels />
        </Work>
        <WindowsTaskbar />
      </Screen>
    </>
  );
}
